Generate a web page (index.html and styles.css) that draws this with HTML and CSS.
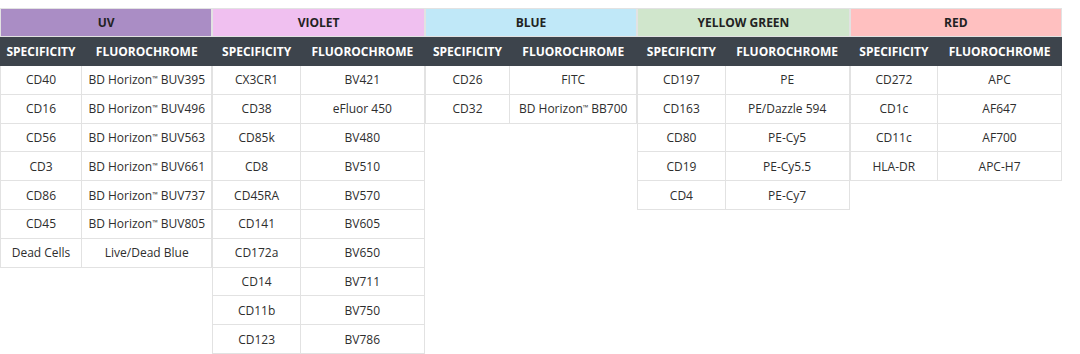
FILE: index.html
```html
<!DOCTYPE html>
<html>
<head>
  <meta charset="utf-8">
  <meta name="viewport" content="width=device-width, initial-scale=1">
  <title>Panel fluorochromes</title>
  <link rel="stylesheet" href="styles.css">
</head>
<body>
  <div class="panel">
    <table class="laser uv">
      <thead>
        <tr class="laser-name"><th colspan="2">UV</th></tr>
        <tr class="cols"><th>Specificity</th><th>Fluorochrome</th></tr>
      </thead>
      <tbody>
        <tr><td>CD40</td><td>BD Horizon<span class="tm">™</span> BUV395</td></tr>
        <tr><td>CD16</td><td>BD Horizon<span class="tm">™</span> BUV496</td></tr>
        <tr><td>CD56</td><td>BD Horizon<span class="tm">™</span> BUV563</td></tr>
        <tr><td>CD3</td><td>BD Horizon<span class="tm">™</span> BUV661</td></tr>
        <tr><td>CD86</td><td>BD Horizon<span class="tm">™</span> BUV737</td></tr>
        <tr><td>CD45</td><td>BD Horizon<span class="tm">™</span> BUV805</td></tr>
        <tr><td>Dead Cells</td><td>Live/Dead Blue</td></tr>
      </tbody>
    </table>

    <table class="laser violet">
      <thead>
        <tr class="laser-name"><th colspan="2">Violet</th></tr>
        <tr class="cols"><th>Specificity</th><th>Fluorochrome</th></tr>
      </thead>
      <tbody>
        <tr><td>CX3CR1</td><td>BV421</td></tr>
        <tr><td>CD38</td><td>eFluor 450</td></tr>
        <tr><td>CD85k</td><td>BV480</td></tr>
        <tr><td>CD8</td><td>BV510</td></tr>
        <tr><td>CD45RA</td><td>BV570</td></tr>
        <tr><td>CD141</td><td>BV605</td></tr>
        <tr><td>CD172a</td><td>BV650</td></tr>
        <tr><td>CD14</td><td>BV711</td></tr>
        <tr><td>CD11b</td><td>BV750</td></tr>
        <tr><td>CD123</td><td>BV786</td></tr>
      </tbody>
    </table>

    <table class="laser blue">
      <thead>
        <tr class="laser-name"><th colspan="2">Blue</th></tr>
        <tr class="cols"><th>Specificity</th><th>Fluorochrome</th></tr>
      </thead>
      <tbody>
        <tr><td>CD26</td><td>FITC</td></tr>
        <tr><td>CD32</td><td>BD Horizon<span class="tm">™</span> BB700</td></tr>
      </tbody>
    </table>

    <table class="laser yellow-green">
      <thead>
        <tr class="laser-name"><th colspan="2">Yellow Green</th></tr>
        <tr class="cols"><th>Specificity</th><th>Fluorochrome</th></tr>
      </thead>
      <tbody>
        <tr><td>CD197</td><td>PE</td></tr>
        <tr><td>CD163</td><td>PE/Dazzle 594</td></tr>
        <tr><td>CD80</td><td>PE-Cy5</td></tr>
        <tr><td>CD19</td><td>PE-Cy5.5</td></tr>
        <tr><td>CD4</td><td>PE-Cy7</td></tr>
      </tbody>
    </table>

    <table class="laser red">
      <thead>
        <tr class="laser-name"><th colspan="2">Red</th></tr>
        <tr class="cols"><th>Specificity</th><th>Fluorochrome</th></tr>
      </thead>
      <tbody>
        <tr><td>CD272</td><td>APC</td></tr>
        <tr><td>CD1c</td><td>AF647</td></tr>
        <tr><td>CD11c</td><td>AF700</td></tr>
        <tr><td>HLA-DR</td><td>APC-H7</td></tr>
      </tbody>
    </table>
  </div>
</body>
</html>
```

FILE: styles.css
```css
body {
  margin: 0;
  padding-top: 8px;
  background: #fff;
  font-family: "Open Sans", "Liberation Sans", sans-serif;
  font-size: 12px;
  color: #2e2e2e;
}
.panel {
  display: flex;
  align-items: flex-start;
  width: 1062px;
}
.laser {
  flex: 1 1 0;
  width: 20%;
  min-width: 0;
  border-collapse: collapse;
  text-align: center;
}
.laser th,
.laser td {
  border: 1px solid #e2e2e2;
  height: 28px;
  padding: 0 4px;
  white-space: nowrap;
}
.laser tbody td {
  height: 27.8px;
}
.tm {
  font-size: 0.6em;
  vertical-align: 0.45em;
  line-height: 0;
}
.laser-name th {
  font-weight: 700;
  text-transform: uppercase;
  color: #222;
  height: 27px;
}
.cols th {
  background: #3d444c;
  border-color: #3d444c;
  color: #fff;
  font-weight: 700;
  text-transform: uppercase;
}
.uv .laser-name th { background: #aa8dc5; }
.violet .laser-name th { background: #f0c0f0; }
.blue .laser-name th { background: #c0e8f8; }
.yellow-green .laser-name th { background: #d0e6cc; }
.red .laser-name th { background: #ffc0c0; }
```
